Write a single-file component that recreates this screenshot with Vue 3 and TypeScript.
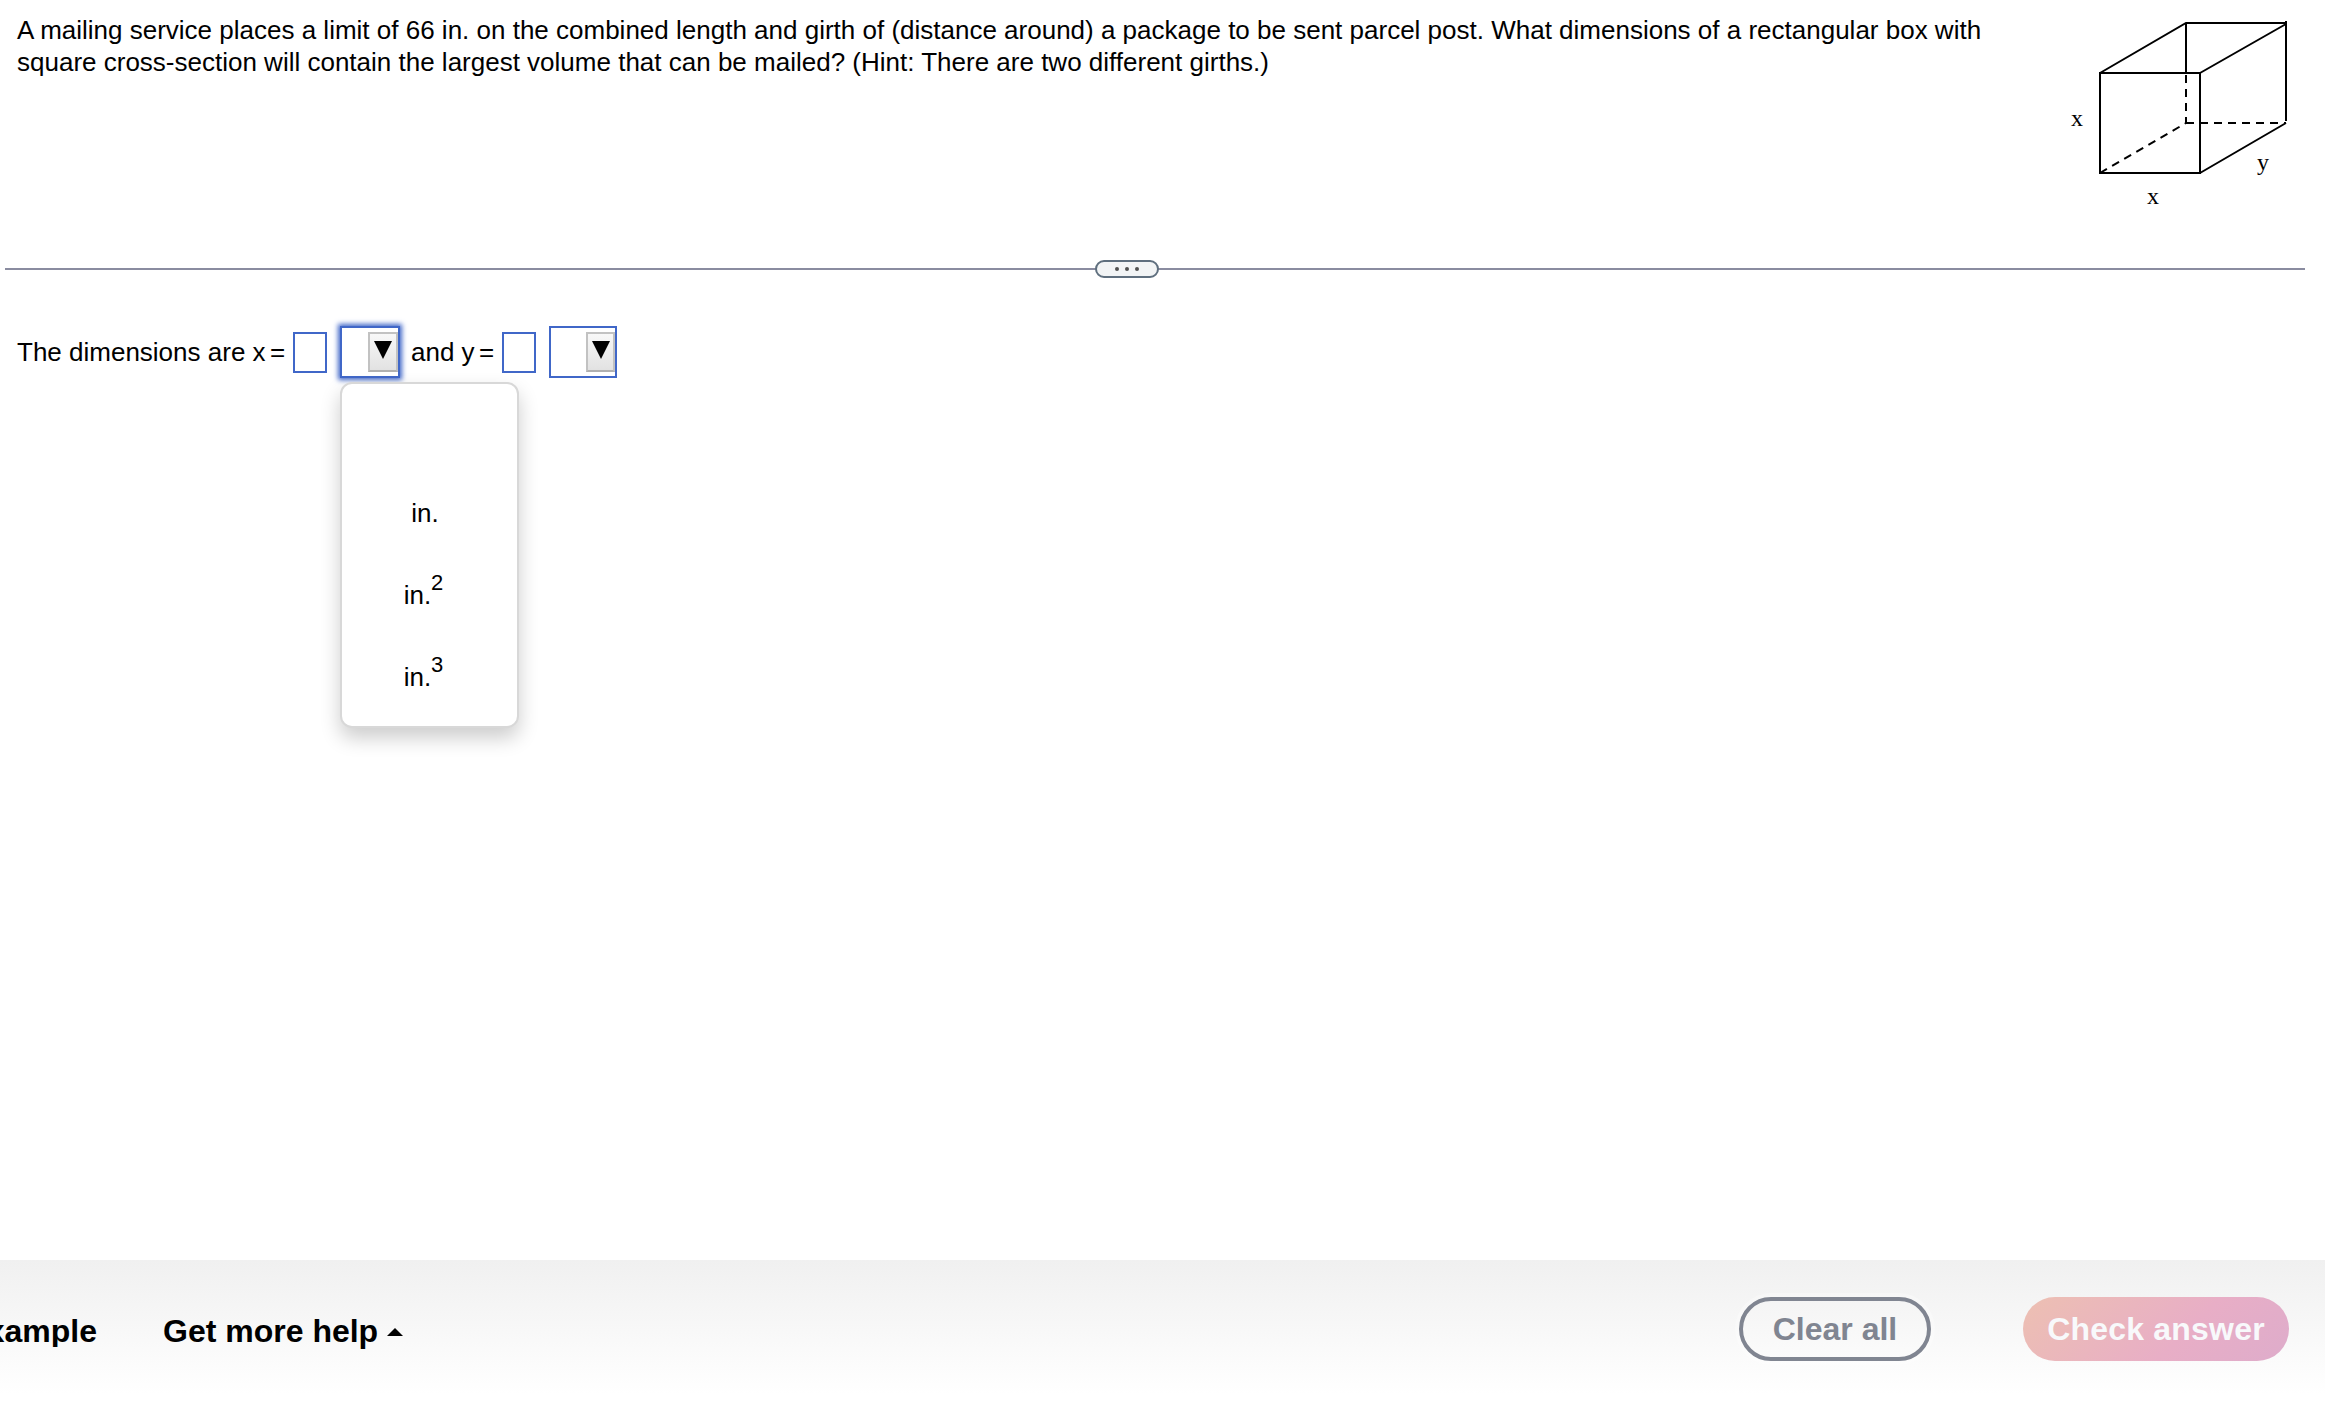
<template>
  <div class="exercise">
    <section class="question">
      <p class="question-text">
        A mailing service places a limit of 66 in. on the combined length and girth of (distance around) a package to be sent parcel post. What dimensions of a rectangular box with<br />
        square cross-section will contain the largest volume that can be mailed? (Hint: There are two different girths.)
      </p>
      <svg class="box-figure" width="275" height="220" viewBox="0 0 275 220">
        <g fill="none" stroke="#000" stroke-width="2">
          <path d="M50 73H150V173H50Z" />
          <path d="M50 73L136 23H236M150 73L236 24" />
          <path d="M236 21V121M150 173L236 123" />
          <path d="M136 23V73" />
          <path d="M136 75V123" stroke-dasharray="8 6" />
          <path d="M136 123H236" stroke-dasharray="8 6" />
          <path d="M50 173L136 123" stroke-dasharray="8 6" />
        </g>
        <text x="21" y="126">x</text>
        <text x="97" y="204">x</text>
        <text x="207" y="170">y</text>
      </svg>
    </section>

    <div class="divider">
      <button class="divider-handle" type="button">
        <i v-for="n in 3" :key="n" class="dot"></i>
      </button>
    </div>

    <section class="answer">
      <span class="label label-x">The dimensions are x</span>
      <span class="equals">=</span>
      <span class="blank"></span>
      <div class="unit unit-first" :class="{ open: menuOpen }" @click="menuOpen = !menuOpen">
        <span class="arrow">
          <svg width="18" height="18" viewBox="0 0 18 18"><path d="M0 0H18L9 18Z" /></svg>
        </span>
        <ul v-if="menuOpen" class="menu">
          <li v-for="unit in units" :key="unit.power" class="menu-item" :class="{ powered: unit.power > 1 }">
            {{ unit.name }}<sup v-if="unit.power > 1">{{ unit.power }}</sup>
          </li>
        </ul>
      </div>
      <span class="label label-y">and y</span>
      <span class="equals">=</span>
      <span class="blank"></span>
      <div class="unit unit-second">
        <span class="arrow">
          <svg width="18" height="18" viewBox="0 0 18 18"><path d="M0 0H18L9 18Z" /></svg>
        </span>
      </div>
    </section>

    <footer class="footer">
      <div class="example-clip"><span class="footer-link">xample</span></div>
      <span class="footer-link help">Get more help</span>
      <svg class="caret" width="16" height="8" viewBox="0 0 16 8"><path d="M0 8L8 0L16 8Z" /></svg>
      <button class="btn clear" type="button">Clear all</button>
      <button class="btn check" type="button">Check answer</button>
    </footer>
  </div>
</template>

<script setup lang="ts">
import { ref } from 'vue';

interface Unit {
  name: string;
  power: number;
}

const menuOpen = ref(true);

// the first entry is the empty choice
const units: Unit[] = [
  { name: '', power: 0 },
  { name: 'in.', power: 1 },
  { name: 'in.', power: 2 },
  { name: 'in.', power: 3 },
];
</script>

<style>
body {
  margin: 0;
  background: #fff;
}
</style>

<style scoped>
.exercise {
  display: flex;
  flex-direction: column;
  width: 2325px;
  height: 1407px;
  overflow: hidden;
  font-family: 'Liberation Sans', Arial, sans-serif;
  font-size: 26px;
  line-height: 32px;
  color: #000;
}

.question {
  display: flex;
  justify-content: space-between;
  height: 260px;
}

.question-text {
  margin: 0;
  padding: 14px 0 0 17px;
  white-space: nowrap;
}

.box-figure {
  flex: none;
}

.box-figure text {
  font-family: 'Liberation Serif', 'Times New Roman', serif;
  font-size: 24px;
}

.divider {
  display: flex;
  align-items: center;
  height: 18px;
  margin: 0 20px 0 5px;
  background: linear-gradient(#8a8ca0, #8a8ca0) 0 8px / 100% 2px no-repeat;
}

.divider-handle {
  display: flex;
  align-items: center;
  justify-content: center;
  gap: 6px;
  box-sizing: border-box;
  width: 64px;
  height: 18px;
  margin-left: 1090px;
  padding: 0;
  border: 2px solid #5f6f7e;
  border-radius: 9px;
  background: #f2f4f5;
}

.dot {
  width: 4px;
  height: 4px;
  border-radius: 50%;
  background: #505050;
}

.answer {
  display: flex;
  align-items: center;
  height: 52px;
  margin: 48px 0 0 17px;
}

.label {
  white-space: nowrap;
}

.label-x {
  width: 253px;
}

.label-y {
  width: 68px;
  margin-left: 11px;
}

.equals {
  width: 23px;
}

.label,
.equals {
  padding-bottom: 1px;
}

.blank {
  box-sizing: border-box;
  width: 34px;
  height: 41px;
  border: 2px solid #4067c8;
}

.unit {
  position: relative;
  display: flex;
  align-items: center;
  justify-content: flex-end;
  box-sizing: border-box;
  height: 52px;
  border: 2px solid #4067c8;
}

.unit-first {
  width: 60px;
  margin-left: 13px;
}

.unit-first .arrow {
  width: 30px;
}

.unit-second {
  width: 68px;
  margin-left: 13px;
}

.open {
  box-shadow: 0 0 5px 2px #4067c8;
}

.arrow {
  box-sizing: border-box;
  width: 29px;
  height: 40px;
  padding: 7px 0 0 4px;
  line-height: 0;
  border: 2px solid #c2c2c2;
  border-bottom-color: #b0b0b0;
  background: linear-gradient(#f8f8f8, #e2e2e2);
}

.menu {
  position: absolute;
  top: 54px;
  left: -2px;
  box-sizing: border-box;
  width: 179px;
  height: 346px;
  margin: 0;
  padding: 6px 0;
  list-style: none;
  border: 2px solid #d8d8d8;
  border-radius: 12px;
  background: #fff;
  box-shadow: 0 10px 20px rgba(0, 0, 0, 0.2);
}

.menu-item {
  height: 82px;
  padding-right: 9px;
  line-height: 82px;
  text-align: center;
}

.powered {
  padding-right: 12px;
}

.menu-item sup {
  position: relative;
  top: -14px;
  font-size: 22px;
  line-height: 0;
  vertical-align: baseline;
}

.footer {
  display: flex;
  align-items: center;
  box-sizing: border-box;
  height: 147px;
  margin-top: auto;
  padding-bottom: 9px;
  background: linear-gradient(#f0f0f0, #fff 134px);
  font-size: 32px;
  font-weight: bold;
}

.example-clip {
  display: flex;
  justify-content: flex-end;
  width: 97px;
  overflow: hidden;
}

.footer-link {
  padding-top: 3px;
}

.help {
  margin-left: 66px;
  white-space: nowrap;
}

.caret {
  margin: 6px 0 0 9px;
}

.btn {
  box-sizing: border-box;
  height: 64px;
  padding: 1px 0 0;
  border: none;
  border-radius: 32px;
  font: bold 32px 'Liberation Sans', Arial, sans-serif;
  white-space: nowrap;
}

.clear {
  width: 192px;
  margin-left: auto;
  border: 4px solid #808591;
  background: transparent;
  color: #808591;
  box-shadow: 0 0 0 4px rgba(255, 255, 255, 0.3);
}

.check {
  width: 266px;
  margin: 0 36px 0 92px;
  background: linear-gradient(135deg, #edc0b2, #e8aec6 60%, #deaccb);
  color: #f8f9fb;
  letter-spacing: 0.2px;
}
</style>
